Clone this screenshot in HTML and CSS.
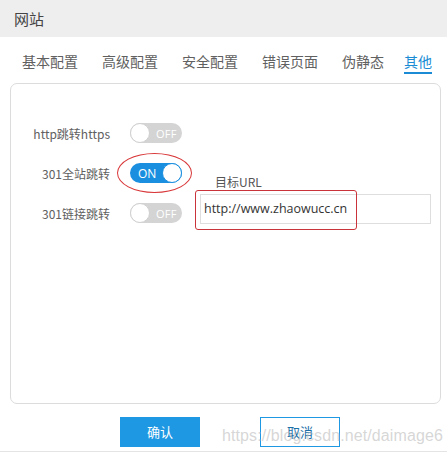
FILE: index.html
```html
<!DOCTYPE html>
<html lang="zh">
<head>
<meta charset="utf-8">
<link rel="stylesheet" href="styles.css">
</head>
<body>
<div class="header">网站</div>
<div class="tabs">
  <span class="tab">基本配置</span>
  <span class="tab">高级配置</span>
  <span class="tab">安全配置</span>
  <span class="tab">错误页面</span>
  <span class="tab">伪静态</span>
  <span class="tab active">其他</span>
</div>
<div class="panel">
  <div class="rows">
    <div class="row">
      <span class="label">http跳转https</span>
      <span class="toggle off"><span class="knob"></span><span class="ttext">OFF</span></span>
    </div>
    <div class="row">
      <span class="label">301全站跳转</span>
      <span class="toggle on"><span class="ttext">ON</span><span class="knob"></span><span class="ring"></span></span>
    </div>
    <div class="row">
      <span class="label">301链接跳转</span>
      <span class="toggle off"><span class="knob"></span><span class="ttext">OFF</span></span>
    </div>
  </div>
  <div class="url">
    <div class="url-label">目标URL</div>
    <div class="url-input">http://www.zhaowucc.cn<span class="mark"></span></div>
  </div>
</div>
<div class="footer">
  <span class="btn primary">确认</span>
  <span class="btn ghost">取消</span>
  <span class="watermark">https://blog.csdn.net/daimage6</span>
</div>
</body>
</html>
```
FILE: styles.css
```css
* { box-sizing: border-box; }
html, body { margin: 0; padding: 0; background: #fff; }
body {
  width: 447px;
  height: 454px;
  overflow: hidden;
  font-family: "Noto Sans CJK SC", "Noto Sans", sans-serif;
  color: #555;
  position: relative;
}
.header {
  height: 37px;
  background: #eeeeee;
  padding-left: 14px;
  font-size: 15px;
  line-height: 37px;
  color: #444;
}
.tabs {
  height: 46px;
  display: flex;
  gap: 24px;
  padding-left: 22px;
  padding-top: 13px;
}
.tab {
  font-size: 14px;
  line-height: 22px;
  height: 24px;
  color: #606060;
}
.tab.active {
  color: #1a8bd4;
  border-bottom: 2px solid #1a8bd4;
  margin-left: -4px;
}
.panel {
  margin: 0 6px 0 10px;
  height: 321px;
  border: 1px solid #dcdcdc;
  border-radius: 7px;
  display: flex;
  padding-top: 39px;
}
.rows {
  display: flex;
  flex-direction: column;
  gap: 20px;
}
.row {
  display: flex;
  align-items: center;
  height: 20px;
}
.label {
  width: 99px;
  text-align: right;
  font-size: 12px;
  color: #606060;
  margin-right: 20px;
}
.toggle {
  position: relative;
  width: 52px;
  height: 20px;
  border-radius: 10px;
  display: flex;
  align-items: center;
  font-family: "Open Sans", "Liberation Sans", sans-serif;
  font-size: 11px;
  color: #fff;
}
.toggle.off { background: #d4d4d4; }
.toggle.on { background: #1a8fe0; }
.knob {
  width: 20px;
  height: 20px;
  border-radius: 50%;
  background: #fff;
  border: 1px solid #d0d0d0;
  flex: none;
}
.toggle.on .knob { border-color: #1a8fe0; }
.toggle.off .ttext { margin-left: 6px; letter-spacing: 0.3px; }
.toggle.on .ttext { margin-left: 8px; margin-right: 6px; font-size: 12px; }
.ring {
  position: absolute;
  left: -13px;
  top: -10px;
  width: 75px;
  height: 40px;
  border: 1px solid #d9383a;
  border-radius: 50%;
}
.url {
  margin-left: 18px;
  padding-top: 51px;
}
.url-label {
  font-size: 12px;
  color: #555;
  padding-left: 15px;
  line-height: 16px;
  height: 16px;
}
.url-input {
  position: relative;
  margin-top: 4px;
  width: 231px;
  height: 30px;
  border: 1px solid #dedede;
  font-family: "Open Sans", "Liberation Sans", sans-serif;
  font-size: 12.5px;
  color: #333;
  line-height: 28px;
  padding-left: 3px;
}
.mark {
  position: absolute;
  left: -6px;
  top: -5px;
  width: 162px;
  height: 40px;
  border: 1px solid #c9343a;
  border-radius: 3px;
}
.footer {
  position: relative;
  display: flex;
  gap: 60px;
  padding-left: 120px;
  margin-top: 13px;
  height: 35px;
  border-bottom: 1px solid #e4e4e4;
}
.btn {
  width: 80px;
  height: 30px;
  line-height: 30px;
  text-align: center;
  font-size: 13px;
}
.btn.primary { background: #1e98e3; color: #fff; }
.btn.ghost { border: 1px solid #1e98e3; color: #1d6fa8; line-height: 28px; }
.watermark {
  position: absolute;
  left: 222px;
  top: 10px;
  font-family: "Liberation Sans", Arial, sans-serif;
  font-size: 16px;
  color: rgba(180, 180, 180, 0.55);
  letter-spacing: 0.1px;
  pointer-events: none;
}
```
